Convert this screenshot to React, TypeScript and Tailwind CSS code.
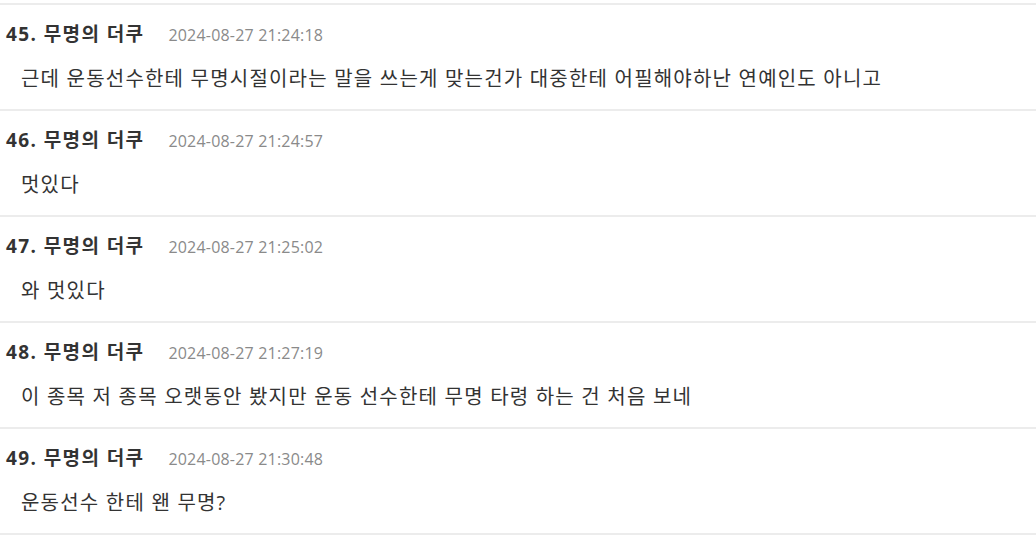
import React from "react";

const comments = [
  { no: 45, time: "2024-08-27 21:24:18", text: "근데 운동선수한테 무명시절이라는 말을 쓰는게 맞는건가 대중한테 어필해야하난 연예인도 아니고" },
  { no: 46, time: "2024-08-27 21:24:57", text: "멋있다" },
  { no: 47, time: "2024-08-27 21:25:02", text: "와 멋있다" },
  { no: 48, time: "2024-08-27 21:27:19", text: "이 종목 저 종목 오랫동안 봤지만 운동 선수한테 무명 타령 하는 건 처음 보네" },
  { no: 49, time: "2024-08-27 21:30:48", text: "운동선수 한테 왠 무명?" },
];

function Comment({ no, time, text }: { no: number; time: string; text: string }) {
  return (
    <li className="border-t-2 border-[#ececec] h-[106px] flex flex-col">
      <div className="flex items-baseline pl-[6px] pt-[17px] leading-[24px]">
        <span className="text-[19px] font-bold text-[#333] tracking-[1.4px]">{no}. 무명의 더쿠</span>
        <span className="ml-[24px] text-[16px] text-[#8a8a8a] tracking-[0.2px]">{time}</span>
      </div>
      <p className="pl-[21px] pt-[18px] text-[20px] leading-[28px] text-[#333] tracking-[1.2px]">{text}</p>
    </li>
  );
}

export default function App() {
  return (
    <div className="bg-white w-[1036px] h-[535px] overflow-hidden pt-[3px] font-['Open_Sans','Noto_Sans_CJK_KR',sans-serif]">
      <ul className="border-b-2 border-[#ececec]">
        {comments.map((c) => (
          <Comment key={c.no} {...c} />
        ))}
      </ul>
    </div>
  );
}
